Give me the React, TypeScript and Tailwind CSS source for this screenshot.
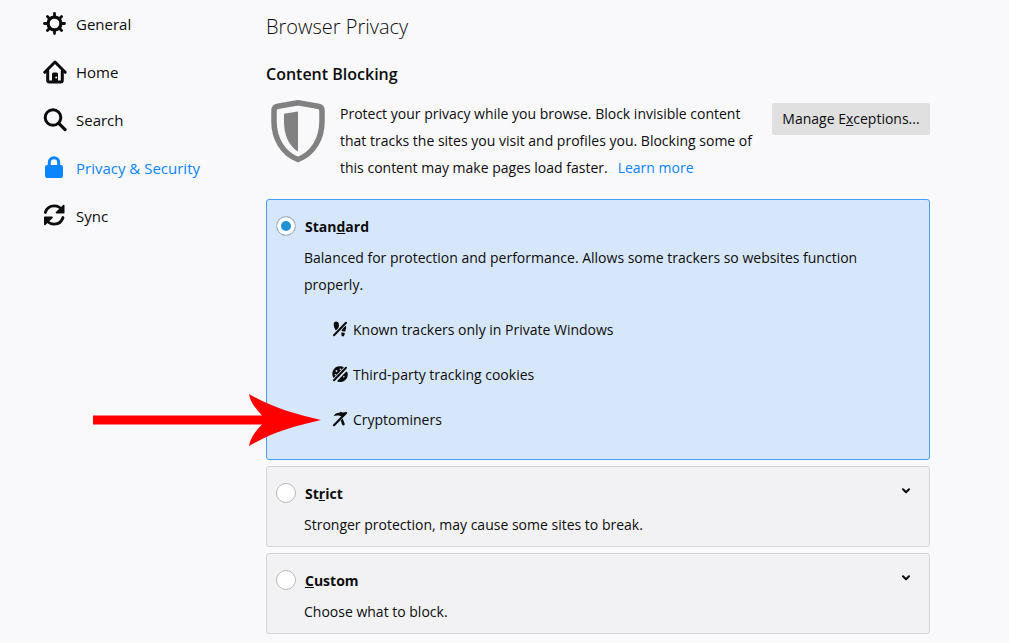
import React, { useState } from 'react';

interface IconProps {
  className?: string;
}

const GearIcon = ({ className }: IconProps) => (
  <svg viewBox="0 0 24 24" className={className} fill="none" stroke="currentColor" strokeLinecap="round" aria-hidden="true">
    <circle cx="11.500" cy="11.500" r="6.400" strokeWidth="3.200" />
    <path strokeWidth="2.800" d="M11.500 1.500v3M11.500 18.500v3M1.500 11.500h3M18.500 11.500h3M4.400 4.400l2 2M16.600 16.600l2 2M4.400 18.600l2-2M16.600 6.400l2-2" />
  </svg>
);

const HomeIcon = ({ className }: IconProps) => (
  <svg viewBox="0 0 24 24" className={className} fill="none" stroke="currentColor" strokeLinecap="round" strokeLinejoin="round" aria-hidden="true">
    <path strokeWidth="3" d="M1.8 12.3L12 2l10.2 10.3" />
    <path strokeWidth="3" d="M4.7 11v9.3c0 1 .5 1.7 1.7 1.7h11.2c1.200 0 1.700-.700 1.700-1.700V11" />
    <path fill="currentColor" stroke="none" d="M9 22v-8a1.500 1.500 0 0 1 1.500-1.500h3A1.500 1.500 0 0 1 15 14v8z" />
    <circle cx="13.200" cy="17.500" r="1" fill="#f9f9fb" stroke="none" />
  </svg>
);

const SearchIcon = ({ className }: IconProps) => (
  <svg viewBox="0 0 24 24" className={className} fill="none" stroke="currentColor" strokeLinecap="round" aria-hidden="true">
    <circle cx="10" cy="9.500" r="7.800" strokeWidth="3" />
    <path strokeWidth="3.200" d="M15.800 15.300l6.300 6.300" />
  </svg>
);

const LockIcon = ({ className }: IconProps) => (
  <svg viewBox="0 0 24 24" className={className} aria-hidden="true">
    <path fill="none" stroke="currentColor" strokeWidth="3" d="M6.300 10V6.500a4.700 4.700 0 0 1 9.400 0V10" />
    <rect x="2" y="9" width="18" height="13" rx="2.200" fill="currentColor" />
  </svg>
);

const SyncIcon = ({ className }: IconProps) => (
  <svg viewBox="0 0 24 24" className={className} fill="none" stroke="currentColor" strokeWidth="2.800" strokeLinecap="round" aria-hidden="true">
    <path d="M2.300 8.500C3.600 4.200 7.300 1.900 11.300 1.900c3.300 0 6 1.500 7.500 4" />
    <path d="M20 13.500c-1.300 4.300-4.800 6.600-8.800 6.600-3.300 0-6-1.500-7.500-4" />
    <path fill="currentColor" stroke="none" d="M21.500 1.500v7.200a.8.8 0 0 1-.8.8h-7.200c-.8 0-1.100-.9-.6-1.400l7.200-7.200c.5-.5 1.400-.1 1.400.6z" />
    <path fill="currentColor" stroke="none" d="M1 20.500v-7.200a.8.8 0 0 1 .8-.8H9c.8 0 1.100.9.6 1.400l-7.200 7.200c-.5.5-1.400.1-1.400-.6z" />
  </svg>
);

const ShieldIcon = ({ className }: IconProps) => (
  <svg viewBox="0 0 54 63" className={className} aria-hidden="true">
    <path
      fill="none"
      stroke="currentColor"
      strokeWidth="5.500"
      strokeLinejoin="round"
      d="M27 2.800l-20 3.400c-2.400.4-4 1.800-4 4.300v11c0 17 8.500 32 24 38 15.500-6 24-21 24-38v-11c0-2.500-1.600-3.900-4-4.300z"
    />
    <path fill="currentColor" d="M27 11.500v40C17.500 46 13 34.500 13 21.500v-7.700z" />
  </svg>
);

const TrackersIcon = ({ className }: IconProps) => (
  <svg viewBox="0 0 16 16" className={className} fill="currentColor" aria-hidden="true">
    <path d="M1.700 3.500C1.700 1.300 2.700.5 4.200.5S7 1.800 7 4c0 1.500-.5 2.500-.7 3.500L3.800 9.500C2.700 7.500 1.700 6 1.700 3.500z" />
    <path d="M14 4.500c.5 2.500-.3 4.500-.8 6.200l-3.500-.7c-.2-1.500 0-2.800 1-3.700zM9.500 11.300l3.300.7c-.2 2.200-.9 3.500-2.100 3.400-1.300-.2-1.600-1.700-1.200-4.100z" />
    <path stroke="#d7e7fb" strokeWidth="3.400" d="M2 14.200L14 1.800" />
    <path stroke="currentColor" strokeWidth="2" strokeLinecap="round" d="M2 14.200L14 1.800" />
  </svg>
);

const CookieIcon = ({ className }: IconProps) => (
  <svg viewBox="0 0 16 16" className={className} fill="currentColor" aria-hidden="true">
    <path d="M7.800.3c1.700 0 3.200.5 4.300 1.400L2 12.500A7.500 7.500 0 0 1 7.800.3zM15.500 6.500A7.600 7.600 0 0 1 5 15.300l9.300-9.900z" />
    <g fill="#d7e7fb">
      <circle cx="4.500" cy="5" r=".9" />
      <circle cx="8.500" cy="3.300" r=".9" />
      <circle cx="3.500" cy="8.800" r=".8" />
      <circle cx="11.800" cy="10.700" r=".8" />
    </g>
    <path stroke="#d7e7fb" strokeWidth="3.400" d="M2 14.200L14 1.800" />
    <path stroke="currentColor" strokeWidth="2" strokeLinecap="round" d="M2 14.200L14 1.800" />
  </svg>
);

const CryptominersIcon = ({ className }: IconProps) => (
  <svg viewBox="0 0 16 16" className={className} fill="currentColor" aria-hidden="true">
    <path d="M8.300 8.500L10.500 7l2.200 5.800c.4 1.600-1.800 2.300-2.500.9z" />
    <path stroke="#d7e7fb" strokeWidth="3.200" d="M2 14.200L13 3" />
    <path d="M1.800 5C3 2.700 5 1.600 7.500 1.700l.8-1 2.200.8 3.500-.2.500 1-4 3.700L7 4.600C5 4.200 3.500 4.400 1.800 5z" />
    <path stroke="currentColor" strokeWidth="2.200" strokeLinecap="round" d="M2 14.200L14 2" />
  </svg>
);

const ChevronIcon = ({ className }: IconProps) => (
  <svg viewBox="0 0 10 6" className={className} fill="none" stroke="currentColor" strokeWidth="2" strokeLinecap="round" strokeLinejoin="round" aria-hidden="true">
    <path d="M2 1.200l3 3 3-3" />
  </svg>
);

const RedArrow = ({ className }: IconProps) => (
  <svg viewBox="0 0 228 52" className={className} fill="#ff0000" aria-hidden="true">
    <path d="M0 21.500h169C163 15 157 8 156 0c22 13 45 20 72 26-27 6-50 13-72 26 1-8 7-15.500 13-21.500H0z" />
  </svg>
);

const navItems = [
  { label: 'General', icon: GearIcon },
  { label: 'Home', icon: HomeIcon },
  { label: 'Search', icon: SearchIcon },
  { label: 'Privacy & Security', icon: LockIcon, active: true },
  { label: 'Sync', icon: SyncIcon },
];

const standardItems = [
  { label: 'Known trackers only in Private Windows', icon: TrackersIcon },
  { label: 'Third-party tracking cookies', icon: CookieIcon },
  { label: 'Cryptominers', icon: CryptominersIcon, highlighted: true },
];

// title is split around the access key letter
const levels = [
  {
    id: 'standard',
    title: ['Stan', 'd', 'ard'],
    description: 'Balanced for protection and performance. Allows some trackers so websites function properly.',
    items: standardItems,
  },
  {
    id: 'strict',
    title: ['St', 'r', 'ict'],
    description: 'Stronger protection, may cause some sites to break.',
    items: [],
  },
  {
    id: 'custom',
    title: ['', 'C', 'ustom'],
    description: 'Choose what to block.',
    items: [],
  },
];

const App = () => {
  const [level, setLevel] = useState('standard');

  return (
    <div className="min-h-screen flex bg-[#f9f9fb] text-[#0c0c0d] text-sm font-['Open_Sans','Noto_Sans',sans-serif]">
      {/* Sidebar */}
      <nav className="w-[266px] shrink-0 pl-[43px]">
        {navItems.map((item) => (
          <a
            key={item.label}
            href="#"
            className={`flex items-center gap-[9px] h-12 text-[15px] ${item.active ? 'text-[#0a84ff]' : ''}`}
          >
            <item.icon className="w-6 h-6" />
            <span className="pt-[2px]">{item.label}</span>
          </a>
        ))}
      </nav>

      {/* Content */}
      <main className="flex-1 max-w-[664px] mr-4 pt-3">
        <h1 className="text-xl leading-[30px] font-light">Browser Privacy</h1>
        <h2 className="mt-4 text-base leading-8 font-semibold">Content Blocking</h2>

        <div className="mt-[10px] flex items-start">
          <ShieldIcon className="w-[54px] h-[63px] ml-[5px] mr-[15px] shrink-0 text-[#818182]" />
          <p className="flex-1 leading-[27px]">
            Protect your privacy while you browse. Block invisible content that tracks the sites you visit and
            profiles you. Blocking some of this content may make pages load faster.
            <a href="#" className="ml-[10px] text-[#0a84ff]">Learn more</a>
          </p>
          <button className="mt-[3px] ml-3 h-8 w-[158px] shrink-0 rounded-xs bg-[#e0e0e1] hover:bg-[#d2d2d3]">
            Manage E<span className="underline">x</span>ceptions...
          </button>
        </div>

        <div className="mt-[18px] space-y-[6px]">
          {levels.map((item) => {
            const selected = level === item.id;
            return (
              <section
                key={item.id}
                className={`rounded-[3px] border pt-3 pb-2 pl-[9px] pr-4 ${
                  selected ? 'bg-[#d7e7fb] border-[#459ff5]' : 'bg-[#f2f2f4] border-[#d5d5d8]'
                }`}
              >
                <div className="flex items-center h-7">
                  <input
                    type="radio"
                    id={item.id}
                    name="level"
                    checked={selected}
                    onChange={() => setLevel(item.id)}
                    className="appearance-none w-5 h-5 mr-[9px] rounded-full border border-[#b9b9bc] bg-white checked:bg-[#2191d6] checked:shadow-[inset_0_0_0_4px_#fff]"
                  />
                  <label htmlFor={item.id} className="flex-1 pt-[2px] font-bold">
                    {item.title[0]}
                    <span className="underline">{item.title[1]}</span>
                    {item.title[2]}
                  </label>
                  {!selected && (
                    <button aria-label="Expand" onClick={() => setLevel(item.id)} className="px-[2px] pb-1">
                      <ChevronIcon className="w-[10px] h-[6px]" />
                    </button>
                  )}
                </div>
                <p className="mt-1 ml-7 mr-8 leading-[27px]">{item.description}</p>
                {item.items.length > 0 && (
                  <ul className="my-[18px] ml-14 space-y-[18px]">
                    {item.items.map((entry) => (
                      <li key={entry.label} className="relative flex items-center gap-[5px] leading-[27px]">
                        {entry.highlighted && (
                          <RedArrow className="absolute right-full mr-[11px] w-[228px] h-[52px] max-w-none" />
                        )}
                        <entry.icon className="w-4 h-4 mb-[2px]" />
                        {entry.label}
                      </li>
                    ))}
                  </ul>
                )}
              </section>
            );
          })}
        </div>
      </main>
    </div>
  );
};

export default App;
